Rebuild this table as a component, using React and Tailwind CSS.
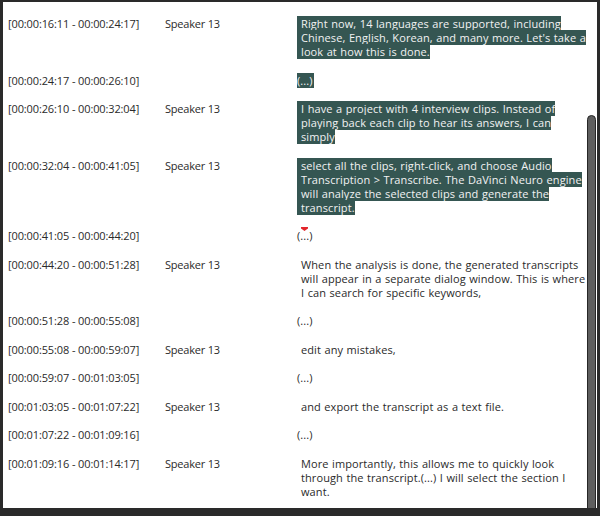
import React from 'react';

const rows = [
  { time: '[00:00:16:11 - 00:00:24:17]', speaker: 'Speaker 13', text: 'Right now, 14 languages are supported, including Chinese, English, Korean, and many more. Let\'s take a look at how this is done.', sel: true, pad: true },
  { time: '[00:00:24:17 - 00:00:26:10]', speaker: '', text: '(...)', sel: true },
  { time: '[00:00:26:10 - 00:00:32:04]', speaker: 'Speaker 13', text: 'I have a project with 4 interview clips. Instead of playing back each clip to hear its answers, I can simply', sel: true, pad: true },
  { time: '[00:00:32:04 - 00:00:41:05]', speaker: 'Speaker 13', text: 'select all the clips, right-click, and choose Audio Transcription > Transcribe. The DaVinci Neuro engine will analyze the selected clips and generate the transcript.', sel: true, pad: true },
  { time: '[00:00:41:05 - 00:00:44:20]', speaker: '', text: '(...)', marker: true },
  { time: '[00:00:44:20 - 00:00:51:28]', speaker: 'Speaker 13', text: 'When the analysis is done, the generated transcripts will appear in a separate dialog window. This is where I can search for specific keywords,', pad: true },
  { time: '[00:00:51:28 - 00:00:55:08]', speaker: '', text: '(...)' },
  { time: '[00:00:55:08 - 00:00:59:07]', speaker: 'Speaker 13', text: 'edit any mistakes,', pad: true },
  { time: '[00:00:59:07 - 00:01:03:05]', speaker: '', text: '(...)' },
  { time: '[00:01:03:05 - 00:01:07:22]', speaker: 'Speaker 13', text: 'and export the transcript as a text file.', pad: true },
  { time: '[00:01:07:22 - 00:01:09:16]', speaker: '', text: '(...)' },
  { time: '[00:01:09:16 - 00:01:14:17]', speaker: 'Speaker 13', text: 'More importantly, this allows me to quickly look through the transcript.(...) I will select the section I want.', pad: true },
];

export default function App() {
  return (
    <div className="w-[600px] h-[516px] bg-[#2a2a2a] pl-[3px] pt-[2px] pr-[3px] pb-[8px] overflow-hidden">
      <div className="h-full bg-white flex overflow-hidden">
        <div className="flex-1 pl-[5px] pt-[15px] text-[11px] leading-[14px] text-[#2a2a2a]" style={{ fontFamily: '"Open Sans", "Noto Sans", sans-serif' }}>
          <div className="flex flex-col gap-[14.5px]">
            {rows.map((r, i) => (
              <div key={i} className="grid grid-cols-[157px_132px_290px]">
                <div className="whitespace-nowrap tracking-[-0.12px]">{r.time}</div>
                <div className="whitespace-nowrap tracking-[-0.2px]">{r.speaker}</div>
                <div className="relative tracking-[0.1px] [word-spacing:0.5px]">
                  {r.marker && (
                    <svg className="absolute left-[4px] top-[-2px]" width="7" height="4" viewBox="0 0 7 4">
                      <path d="M0 0H7V1.5L3.5 4L0 1.5Z" fill="#e3262c" />
                    </svg>
                  )}
                  <span
                    className={`${r.pad ? 'pl-[4px] box-decoration-clone' : 'pr-[1px]'} ${r.sel ? 'bg-[#355652] text-[#f2f2f2]' : ''}`}
                  >
                    {r.text}
                  </span>
                </div>
              </div>
            ))}
          </div>
        </div>
        <div className="w-[10px] flex flex-col pt-[113px]">
          <div className="flex-1 mb-[-4px] mr-[1px] bg-[#5e5e5e] border border-[#262626] rounded-t-[5px]" />
        </div>
      </div>
    </div>
  );
}
